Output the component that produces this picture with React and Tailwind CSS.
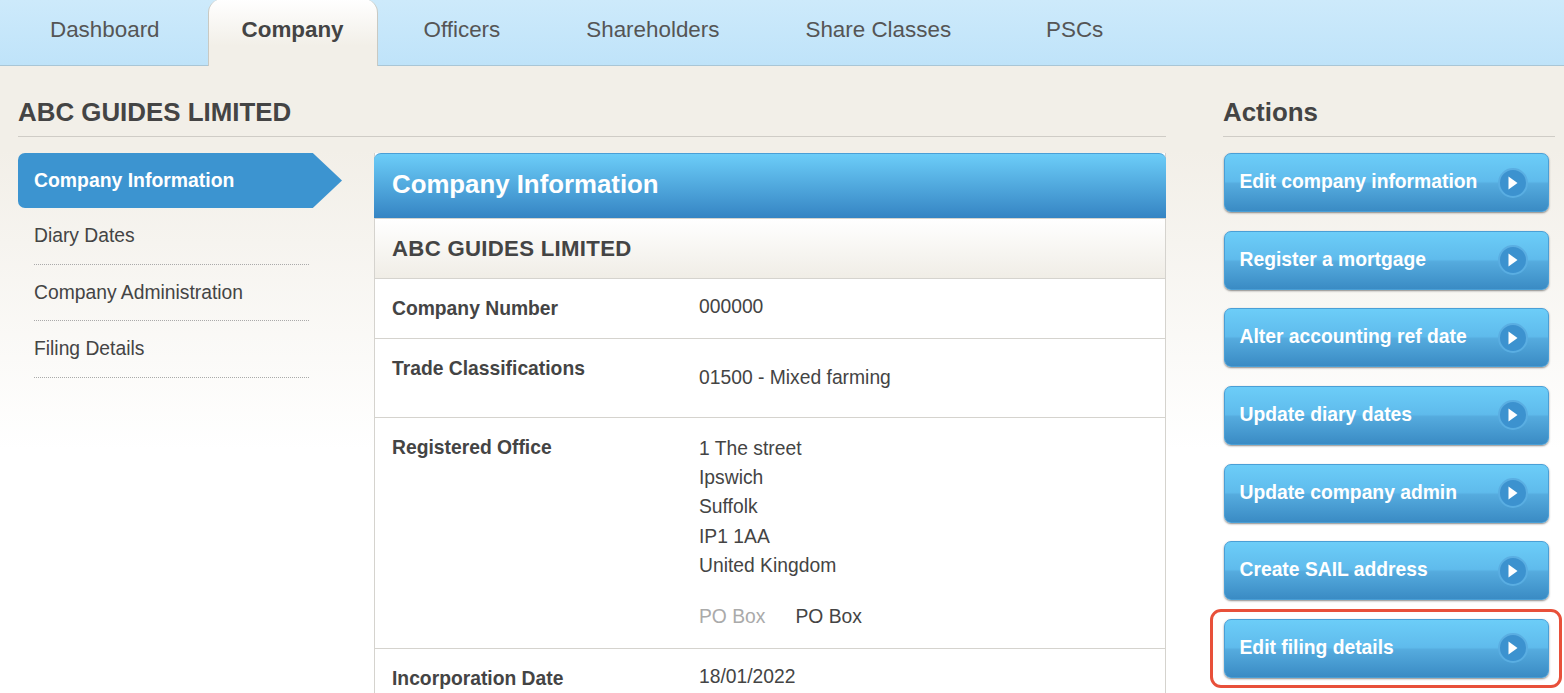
import React from 'react';

const tabs = [
  { label: 'Dashboard', cls: 'pl-[50px] pr-[48px]' },
  { label: 'Company', active: true },
  { label: 'Officers', cls: 'pl-[46px] pr-[43px]' },
  { label: 'Shareholders', cls: 'pl-[43px] pr-[42px]' },
  { label: 'Share Classes', cls: 'pl-[44px] pr-[48px]' },
  { label: 'PSCs', cls: 'pl-[47px] pr-[40px]' },
];

const actions = [
  'Edit company information',
  'Register a mortgage',
  'Alter accounting ref date',
  'Update diary dates',
  'Update company admin',
  'Create SAIL address',
  'Edit filing details',
];

const ArrowCircle = () => (
  <span className="w-[30px] h-[30px] rounded-full bg-[#3c92cf] border-2 border-[#5aaee2] flex items-center justify-center shrink-0">
    <svg width="10" height="14" viewBox="0 0 10 14">
      <path d="M0.5 0.5 L9.5 7 L0.5 13.5 Z" fill="#ffffff" />
    </svg>
  </span>
);

const ActionButton = ({ label, highlighted }) => (
  <div className="relative">
    <div className="h-[59px] rounded-[7px] border border-[#4a9fd6] bg-[linear-gradient(180deg,#6ccdf8_0%,#5fbbec_48%,#55abde_52%,#3a8bc4_100%)] shadow-[0_1px_2px_rgba(60,60,60,0.6)] flex items-center justify-between pl-[14.5px] pr-[20px]">
      <span className="text-[19.3px] font-bold text-white">{label}</span>
      <ArrowCircle />
    </div>
    {highlighted && (
      <div className="absolute left-[-14px] right-[-13px] top-[-10px] bottom-[-10px] border-[3px] border-[#e8503a] rounded-[11px]" />
    )}
  </div>
);

const InfoRow = ({ label, children, cls }) => (
  <div className={`flex border-b border-[#d5d3ce] pl-[17px] ${cls}`}>
    <div className="w-[307px] shrink-0 text-[#444] font-bold text-[19.3px] leading-[26px] mt-[2px]">{label}</div>
    <div className="text-[#444] text-[19.3px]">{children}</div>
  </div>
);

export default function App() {
  return (
    <div className="h-[693px] overflow-hidden bg-[linear-gradient(180deg,#f2efe8_66px,#f2efe8_150px,#ffffff_450px)] font-['Liberation_Sans',Arial,sans-serif]">
      <div className="h-[66px] bg-[linear-gradient(180deg,#cdeafb_0%,#bfe3f9_100%)] border-b border-[#a9c6d6] flex items-end">
        {tabs.map((t) =>
          t.active ? (
            <div key={t.label} className="h-[67px] mb-[-1px] w-[170px] flex justify-center pt-[14px] rounded-t-[14px] border-x border-[#c9c9c2] bg-[linear-gradient(180deg,#ffffff_0%,#f2efe8_70%)] text-[22.4px] font-bold text-[#444] relative">
              {t.label}
            </div>
          ) : (
            <div key={t.label} className={`h-[65px] pt-[13px] text-[22.4px] text-[#555] ${t.cls}`}>
              {t.label}
            </div>
          )
        )}
      </div>

      <div className="flex pt-[31px] pl-[18px]">
        <div className="w-[1148px] shrink-0">
          <h1 className="h-[40px] border-b border-[#cfccc6] text-[25.9px] leading-[30px] font-bold text-[#444]">ABC GUIDES LIMITED</h1>

          <div className="flex pt-[16px]">
            <div className="w-[356px] shrink-0">
              <div className="w-[324px] h-[55px] bg-[#3c94d0] rounded-l-[7px] [clip-path:polygon(0_0,91%_0,100%_50%,91%_100%,0_100%)] pl-[16px] pt-[14px] text-white font-bold text-[19.4px] leading-[26px]">
                Company Information
              </div>
              <div className="pl-[16px] w-[291px]">
                {['Diary Dates', 'Company Administration', 'Filing Details'].map((s) => (
                  <div key={s} className="h-[56.5px] pt-[15px] border-b border-dotted border-[#aaa] text-[19.3px] leading-[26px] text-[#444]">
                    {s}
                  </div>
                ))}
              </div>
            </div>

            <div className="flex-1 border-x border-[#d5d3ce] bg-white">
              <div className="mx-[-1px] h-[65px] rounded-t-[7px] border-t border-[#4a9fd6] bg-[linear-gradient(180deg,#6ccdf8_0%,#3584c3_100%)] pl-[18px] pt-[14px] text-white font-bold text-[25.8px] leading-[32px]">
                Company Information
              </div>
              <div className="h-[61px] border-y border-[#d5d3ce] bg-[linear-gradient(180deg,#ffffff_0%,#f0ede6_100%)] pl-[17px] pt-[16px] text-[22.2px] leading-[28px] font-bold text-[#444] tracking-[0.3px]">
                ABC GUIDES LIMITED
              </div>
              <InfoRow label="Company Number" cls="h-[60px] pt-[15px] leading-[26px]">
                000000
              </InfoRow>
              <InfoRow label="Trade Classifications" cls="h-[79px] pt-[15px] leading-[26px]">
                <div className="pt-[11px]">01500 - Mixed farming</div>
              </InfoRow>
              <InfoRow label="Registered Office" cls="h-[231px] pt-[15px] leading-[29.2px]">
                <div className="pt-[1px]">1 The street</div>
                <div>Ipswich</div>
                <div>Suffolk</div>
                <div>IP1 1AA</div>
                <div>United Kingdom</div>
                <div className="flex gap-[30px] mt-[22px]">
                  <span className="text-[#aaa]">PO Box</span>
                  <span>PO Box</span>
                </div>
              </InfoRow>
              <div className="flex pl-[17px] pt-[15px] leading-[26px] h-[60px]">
                <div className="w-[307px] shrink-0 text-[#444] font-bold text-[19.3px] mt-[2px]">Incorporation Date</div>
                <div className="text-[#444] text-[19.3px]">18/01/2022</div>
              </div>
            </div>
          </div>
        </div>

        <div className="ml-[57px] w-[332px] shrink-0">
          <h2 className="h-[40px] border-b border-[#cfccc6] text-[25.9px] leading-[30px] font-bold text-[#444]">Actions</h2>
          <div className="pt-[16px] pl-[1px] w-[326px] flex flex-col gap-[18.67px]">
            {actions.map((a) => (
              <ActionButton key={a} label={a} highlighted={a === 'Edit filing details'} />
            ))}
          </div>
        </div>
      </div>
    </div>
  );
}
